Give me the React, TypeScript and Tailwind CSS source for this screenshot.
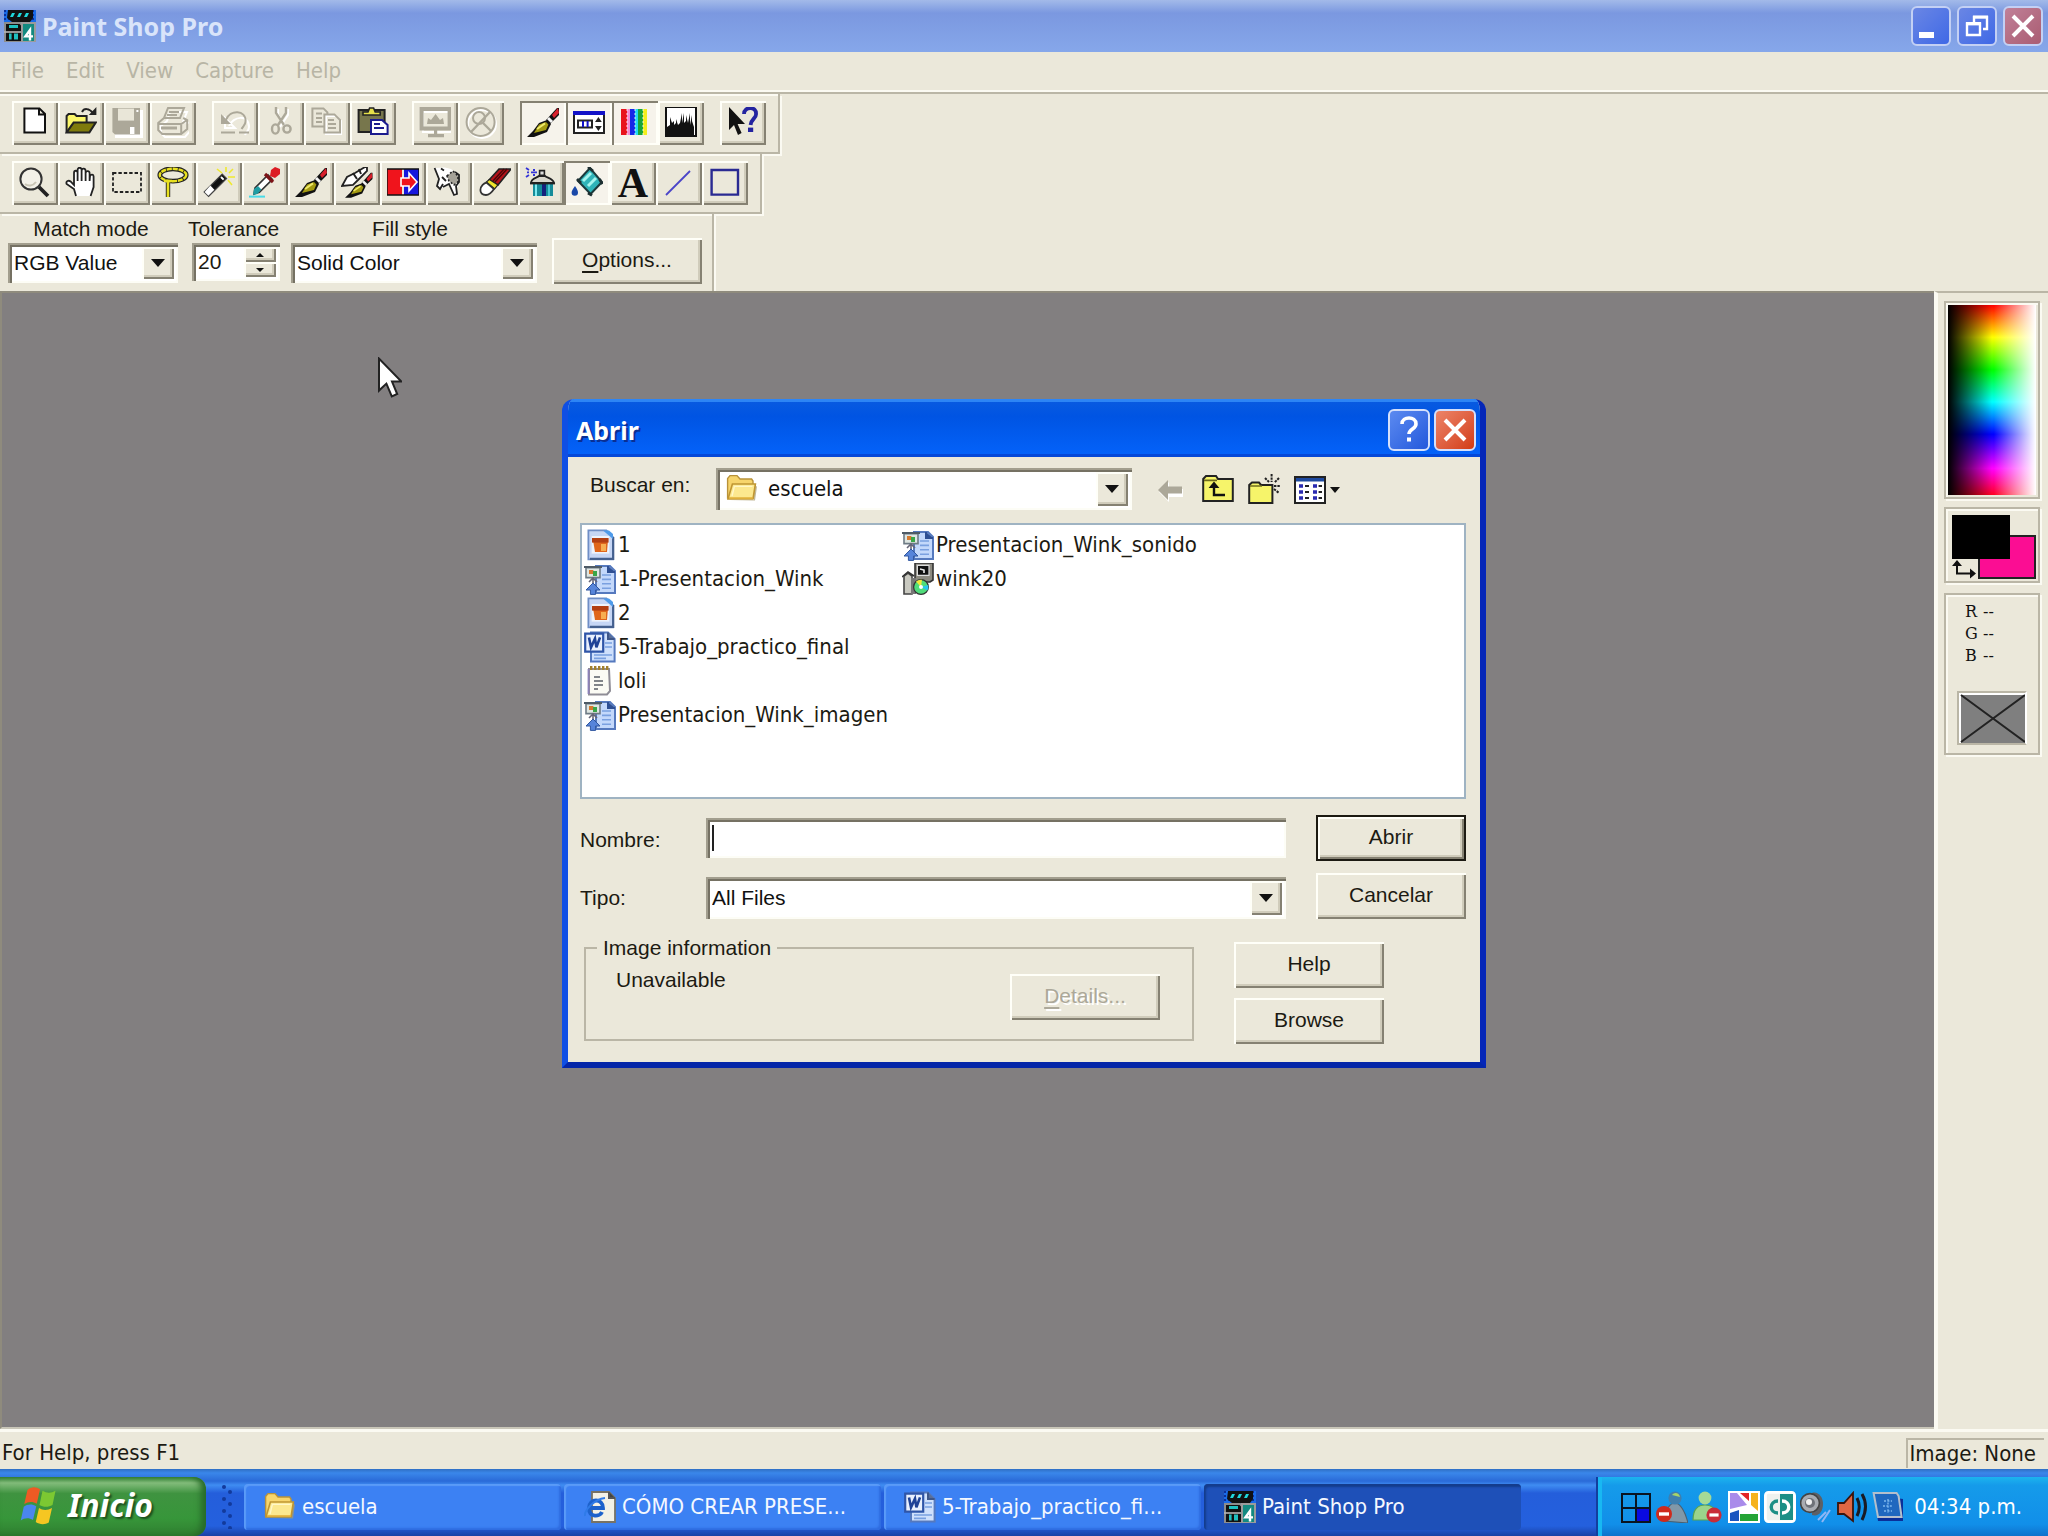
import type { ReactNode } from 'react';
import clsx from 'clsx';

const RAISED = 'bg-[#ebe8da] shadow-[inset_2px_2px_0_#fffff8,inset_-2px_-2px_0_#858172,inset_-4px_-4px_0_#d0ccbb]';
const SUNKEN = 'bg-white shadow-[inset_2px_2px_0_#a29e8e,inset_4px_4px_0_#757163,inset_-2px_-2px_0_#fdfdf6]';
const PRESSED = 'bg-[#f6f3eb] shadow-[inset_2px_2px_0_#858172,inset_-2px_-2px_0_#fffff8]';
const ETCHED = 'border-2 border-[#bab6a6] shadow-[2px_2px_0_#fbfaf2,inset_2px_2px_0_#fbfaf2]';
const TAHOMA = "font-['DejaVu_Sans_Condensed','Noto_Sans',sans-serif] text-[22px] leading-7";

const G = '#aca899';

interface IconProps {
  children: ReactNode;
  className?: string;
}

function Icon({ children, className = 'h-8 w-8' }: IconProps) {
  return (
    <svg viewBox="0 0 16 16" className={clsx('shrink-0', className)} fill="none" aria-hidden="true">
      {children}
    </svg>
  );
}

/* Brush is shared by the palette toggle, the paint tool and the clone tool */
const brush = (
  <>
    <path d="M9.5 6.5 15 .5h1V4l-4.5 4.5z" fill="#111" />
    <path d="m12.5 4 3-3.5.5 2.5-2.500 2.500z" fill="#d8202c" />
    <path d="m10.5 5.5 2 2" stroke="#f4f4f4" strokeWidth="1.5" />
    <path d="M0 15h3.500l6.500-2.500 2-4-2-2-4 1.500-3 4z" fill="#111" />
    <path d="M3.500 13 6 8.800l3.500-1.300 1.200 1.300L9.500 11.500z" fill="#a39a12" />
    <path d="m5 11 4-2.800" stroke="#efe96a" />
  </>
);

const icons: Record<string, ReactNode> = {
  new: <path d="M2.700.7h7.500L13 3.500v9.300H2.700zM10 .7v3h3" fill="#fff" stroke="#111" />,
  open: (
    <>
      <path d="M.8 12.500V4.500l1-1h3l1 1h5v4" fill="#fbf76a" stroke="#222" />
      <path d="m.8 12.700 3.500-4.900H15.400l-3.200 4.900z" fill="#7f7b0c" stroke="#222" />
      <path d="M8.500 2.500c1-2 3.500-2 5.500.5" stroke="#222" />
      <path d="M15.700 0v4h-3.800z" fill="#222" />
    </>
  ),
  save: (
    <>
      <path d="M2 1.500h14v14H2z" fill="#fff" />
      <path d="M.7.5h13.800v13.300H2L.7 12.500z" fill={G} />
      <path d="M3.500.8h8v6h-8z" fill="#e9e6d8" />
      <path d="M9.500 10h2.200v3.500H9.500zM12.700 1.500h1v1h-1z" fill="#fff" />
    </>
  ),
  print: (
    <>
      <path d="M5.500 1.500h8.500L12 6.500l3.500.5v4l-2.500 3H3l-2-2V8.500L4 6z" stroke="#fff" transform="translate(1 1)" />
      <path d="M5.500.5h8L11.500 5.500H3.500zM3.500 5.500.6 8v3.500l2 2h9.500l3-2.500V6.500l-2-1M.6 8.500h11.500l3-2M12.100 8.500v5M6 2.500h5M5 4h5" stroke={G} />
      <path d="M2 10.500h8" stroke={G} strokeWidth="1.500" />
    </>
  ),
  undo: (
    <>
      <path d="M2 4.500v5h5zM4 8.500c2-5 10-6 10 .5 0 2-1.500 2.500-2 4" stroke="#fff" transform="translate(1 1)" />
      <path d="M1 3.500v5h5z" fill={G} />
      <path d="M3.500 6.500C5.500 1 13.500 1.500 13.300 7c0 2-1.300 2.500-2 4" stroke={G} />
      <path d="M1 12.700h8M10 12.700h5" stroke={G} strokeDasharray="7 1 1 1" />
    </>
  ),
  cut: (
    <>
      <path d="M6.500 1v3l4 6M11.500 1v3l-4 6" stroke="#fff" />
      <path d="M5.500 0v3l4 6M10.500 0v3l-4 6" stroke={G} strokeWidth="1.200" />
      <ellipse cx="5.200" cy="11" rx="1.700" ry="2.300" stroke={G} strokeWidth="1.200" />
      <ellipse cx="11" cy="11" rx="1.800" ry="1.800" stroke={G} strokeWidth="1.200" />
    </>
  ),
  copy: (
    <>
      <path d="M.7.7h5.500l2 2v7H.7z" stroke={G} />
      <path d="M7.500 4.500h5l2.500 2.500v6.500H7.500z" stroke="#fff" fill="#ebe8da" />
      <path d="M6.700 3.700h5l2.800 2.800v6.200H6.700zM2.500 3.200h3M2.500 5.500h3M2.500 7.500h3M8.500 6.500h3M8.500 8.500h4M8.500 10.500h4" stroke={G} />
    </>
  ),
  paste: (
    <>
      <path d="M.8 1.500h13v11h-13z" fill="#77764c" stroke="#222" />
      <path d="M3 4V2.500h2.500l.8-2h2l.8 2h2.500V4z" fill="#e6e04a" stroke="#222" strokeWidth=".8" />
      <path d="M7 6.500h5.500L15.300 9v4.500H7z" fill="#fff" stroke="#1b1b8e" />
      <path d="M8.500 8.500h3M8.500 10.500h5" stroke="#1b1b8e" />
    </>
  ),
  screen: (
    <>
      <path d="M1 1.500h14v10H1z" stroke="#fff" transform="translate(1 1)" />
      <path d="M1.300 1h14v9.700h-14z" stroke={G} strokeWidth="2" />
      <path d="m4 8.500.5-3 1.500 1 2.300-3 2.200 3 1.500-1 .5 3z" fill={G} />
      <path d="M8.300 10v4M4.500 14.300h8" stroke={G} strokeWidth="1.600" />
    </>
  ),
  nozoom: (
    <>
      <circle cx="8.500" cy="8.500" r="7" stroke="#fff" />
      <circle cx="7.800" cy="7.500" r="7" stroke={G} />
      <circle cx="7" cy="5.500" r="3" stroke={G} />
      <path d="m12.500 2.500-9.500 10M9 8l4 4" stroke={G} strokeWidth="1.200" />
    </>
  ),
  brush,
  palette: (
    <>
      <path d="M.5 3h15v10H.5z" fill="#fff" stroke="#222" />
      <path d="M0 2h16v2H0z" fill="#1212c8" />
      <path d="M2.500 6.800h7v3.400h-7z" stroke="#222" />
      <path d="M5 7v3M7.300 7v3" stroke="#1212c8" />
      <path d="m12.700 5 1.700 2.500H11zM12.700 12l1.700-2.500H11z" fill="#222" />
    </>
  ),
  colors: (
    <>
      <path d="M1 1h3v13H1z" fill="#e8141c" />
      <path d="M4 1h1.500v13H4z" fill="#f58bd0" />
      <path d="M5.500 1H8v13H5.500z" fill="#1526e8" />
      <path d="M8 1h1.500v13H8z" fill="#23d8f4" />
      <path d="M9.500 1H12v13H9.500z" fill="#17a53a" />
      <path d="M12 1h2v13h-2z" fill="#f2ee1e" />
      <path d="M4 1v13M8 1v13M12 1v13" stroke="#fff" strokeWidth=".8" strokeDasharray="1 1" opacity=".5" />
    </>
  ),
  histogram: (
    <>
      <path d="M.5 0h15v14.500H.5z" fill="#fff" stroke="#111" />
      <path d="M1 14V10l1.500-1V5l1 3 1-1v2l1-1V6l1 3 1-1 1-5v5l1-5v5l1-1V4l1 4 1-5v6l1-5v3l1 3v4z" fill="#111" />
    </>
  ),
  help: (
    <>
      <path d="M1 0v11.500l2.500-2.500 2 5 1.800-1-2-4.500H9z" fill="#111" />
      <path d="M8.500 3.500c0-4 6.500-4 6 .2 0 2-2.500 2.300-2.700 5.300" stroke="#2424a0" strokeWidth="1.900" />
      <path d="M10.500 10.300h2.600v2.200h-2.600z" fill="#2424a0" />
    </>
  ),
  zoom: (
    <>
      <circle cx="6" cy="6" r="5.300" fill="#f3f1e8" stroke="#333" />
      <path d="M3 8.500c1.500 1.300 4 1 5.500-1" stroke="#c9c5b5" />
      <path d="m10 10 4.500 4.500" stroke="#222" strokeWidth="1.900" />
    </>
  ),
  pan: (
    <path
      d="M5.500 14.500 4.500 11 .8 8.500c-.5-1.500 1-2 2-1.300L4.500 9V3c0-1.500 1.800-1.500 1.800 0v4V1.500c0-1.500 2-1.500 2 0V7 1.800c.2-1.500 2-1.300 2 .2v5-4c.2-1.300 2-1.200 2 .2V7l.2-2.500c.5-1 1.800-.8 1.800.3V10l-1.500 4.500"
      fill="#fff"
      stroke="#222"
      strokeWidth=".9"
    />
  ),
  select: <path d="M1 3h14v9.500H1z" stroke="#222" strokeWidth=".9" strokeDasharray="1.700 1" />,
  lasso: (
    <>
      <path d="M5.500 8v7" stroke="#222" strokeWidth="2.200" />
      <ellipse cx="8" cy="4" rx="6.600" ry="3.100" stroke="#222" strokeWidth="2.400" />
      <ellipse cx="8" cy="4" rx="6.600" ry="3.100" stroke="#e8e020" strokeWidth="1.200" strokeDasharray="2.500 .4" />
      <path d="M5.500 7v8M3.500 7h4" stroke="#e8e020" strokeWidth="1.300" />
    </>
  ),
  wand: (
    <>
      <path d="m.6 12.500 9-9 2.200 2.200-9 9z" fill="#111" stroke="#444" strokeWidth=".6" />
      <path d="m1.500 12.500 1.200 1.200L5 11.400 3.700 10zM9 5l1.300 1.300" fill="#fff" stroke="#fff" />
      <path d="M11.500 0v2.500M7 1l2.500 2M15 1l-2 2M12.500 5H16M12.500 6.500l2 2.500" stroke="#efe930" strokeWidth=".8" />
    </>
  ),
  dropper: (
    <>
      <path d="M0 14.800h8" stroke="#49dbe8" />
      <path d="m2.500 13.500.5-3 6.500-6.500 2.200 2.200-6.500 6.500z" fill="#fff" stroke="#333" strokeWidth=".8" />
      <path d="m2 14 .5-3 2-1.500 1.700 1.700-2 2.300z" fill="#1f9da3" />
      <path d="m8 3.500 4 4" stroke="#7c1216" strokeWidth="1.600" />
      <path d="m10.500 4.500.5-3L13 0l2.500 1v2.500L13 5.500z" fill="#dc1c24" />
    </>
  ),
  clone: (
    <>
      <path d="M.5 9.500 3 5l4-2 5-3h1v2L9 6 6 9z" fill="#fff" stroke="#222" strokeWidth=".9" />
      <path d="m6 3 2 3M9 1l1 2.500" stroke="#222" />
      <g transform="translate(2 2.500) scale(.86)">{brush}</g>
    </>
  ),
  replace: (
    <>
      <path d="M0 1h7.500v13H0z" fill="#f0141c" />
      <path d="M8.500 1H16v13H8.500z" fill="#1717dd" />
      <path d="M0 1h16v13H0z" stroke="#111" strokeWidth=".7" />
      <path d="M7 5.500h4V3l4 4.500-4 4.500V9.500H7z" fill="#f0141c" stroke="#fff" strokeWidth=".8" />
    </>
  ),
  retouch: (
    <>
      <path d="M1 .5 6 .3l3 .7 4 3.500v4l-1 2v3.500l-1.500.5L8 9l-3 1.500-1.500.5L2 9l1-3z" fill="#fff" />
      <path d="M.8.5 3 6 2 9.500 3.500 11 5 8.500M5 10l3-1.500 2.500 5.500 1.500-.5-.5-4 1.500-2V4L11 2.500M4.500 5l2 2M4 .8l1.500 1" stroke="#222" strokeWidth=".9" />
      <path d="m7 4.500 3-2.500 2.500 2.500v3l-2 1.500L8 7z" fill="#a5a298" stroke="#222" strokeWidth=".8" strokeDasharray="1 1" />
    </>
  ),
  eraser: (
    <>
      <path d="m5 6.500 5-5.500h6L9.500 9z" fill="#b5121a" stroke="#222" strokeWidth=".8" />
      <path d="m7 7 5.500-6M14 1 8 7.500" stroke="#4a0508" strokeWidth=".7" />
      <path d="m3.700 7.500 1.500-1.300L9.500 9l-1.700 2z" fill="#efe42c" stroke="#222" strokeWidth=".6" />
      <path d="M.7 11.500c0-2 2-3.500 3-3.700L7.500 11c-1 1.500-2 3-4 3S.7 13 .7 11.500z" fill="#fff" stroke="#333" strokeWidth=".9" />
    </>
  ),
  airbrush: (
    <>
      <path d="M.5.5 2 1.500M.5 5 2 4M3 2.700h3M1 2.700h1M4 1.500h1M4 4h1" stroke="#3434d6" strokeWidth=".9" />
      <path d="M7.300 1.800h2.400v2.300H7.300z" fill="#ddd" stroke="#222" strokeWidth=".8" />
      <path d="M3 8c0-2.500 3-2.500 4-3.500h3c1 1 4 1 4.500 3.500z" fill="#d9d7cc" stroke="#222" strokeWidth=".9" />
      <path d="M4 8.500h10v6H4z" fill="#158c99" />
      <path d="M5.500 8.500v6" stroke="#7eeaf0" />
      <path d="M9.500 8.500v6" stroke="#15217c" strokeWidth="2" />
      <path d="M12 8.500v6" stroke="#4ac7d2" />
      <path d="M2.500 8.200h12.500" stroke="#222" />
    </>
  ),
  fill: (
    <>
      <path d="m3.500 7 6-6.500L15.500 7.500 9.800 13.500z" fill="#2fb3b8" stroke="#1b3a3c" />
      <path d="m6 7 4-4M8.500 9.500l4-4" stroke="#a5f4ee" strokeWidth="1.500" />
      <path d="M8.500 0 11 2M14.200 6l1.500 2.500M3 6l2 2M8.500 13l2 1.200" stroke="#1d2e30" strokeWidth="1.400" />
      <path d="M2 9.500c1 1.500 1.500 2.300 1.500 3.300a1.600 1.600 0 0 1-3.200 0C.3 11.800 1 11 2 9.500z" fill="#1a48a8" />
    </>
  ),
  line: <path d="M1.500 14 13.500 2" stroke="#4a44c8" strokeWidth=".9" />,
  rect: <path d="M1.300 1.500h13.200v12.300H1.300z" stroke="#2a2a92" strokeWidth="1.200" />,
};

function PspIcon({ className = 'h-8 w-8' }: { className?: string }) {
  return (
    <Icon className={className}>
      <path d="M0 0h16v6H0z" fill="#1a6be8" />
      <path d="M0 .5h16M0 2.500h16M0 4.500h16" stroke="#0a2f9a" strokeDasharray="1 1" />
      <path d="M2 0h12.500v4L13 6H4L1.500 4z" fill="#111" />
      <path d="m3 3.500 1-2h1.500l-1 2zM6.500 3.500l1-2H9l-1 2zM10 3.500l1-2h1.500l-1 2z" fill="#1fd8dc" />
      <path d="M.5 6.500H8l1 1V16H.5z" fill="#111" stroke="#8d8d8d" />
      <path d="M2.500 8.300h4.500M2.500 12.500h1.300M5 12.500h2M2.500 14h1.300M5 14h2" stroke="#1fc0c0" strokeWidth="1.500" />
      <path d="M0 11h8.500" stroke="#b5b5b5" strokeWidth=".8" />
      <path d="M9 6.500h6.500V16H9z" fill="#138a80" stroke="#9b9b9b" />
      <path d="M13 15.200V10l-2.300 3.200h3.800" stroke="#fff" strokeWidth="1.200" />
    </Icon>
  );
}

function FolderIcon() {
  return (
    <Icon>
      <path d="M2 13.800h12.500l1-7-1.500-.5V14z" fill="#a79a6c" opacity=".7" />
      <path d="M.8 12.500V2.800L2 1.300h3.500L7 3h5.800l.7 1v8.500z" fill="#f7d56c" stroke="#b8923a" strokeWidth=".7" />
      <path d="M1 13 3.200 5.500h11.500L13.500 13z" fill="#fce88f" stroke="#c09632" strokeWidth=".8" />
      <path d="M3 11.500 4.200 6.700h9" stroke="#fff7c8" strokeWidth=".7" />
      <path d="M1.500 12.500h12" stroke="#e2b038" strokeWidth=".8" />
    </Icon>
  );
}

function PictureFileIcon() {
  return (
    <Icon>
      <path d="M2.200.7h9L14.500 4v11.200H2.200z" fill="#c6d6f5" stroke="#6f8ec6" strokeWidth=".9" />
      <path d="M3 14.900h11.600V4" stroke="#44608f" strokeWidth="1.100" />
      <path d="M9.500.7 14.500 5V2.500L12.500.7z" fill="#4f9bea" />
      <path d="M3.800 3.500h8.900v8.800H3.800z" fill="#eef3fc" />
      <path d="M4.500 5.500h7.500l-.5 6h-6z" fill="#e0661c" />
      <path d="M4 4.500h8.300v2.300H4z" fill="#b33f14" />
      <path d="M8.500 7.500h2.500v3.500H8.500z" fill="#f7ae52" />
    </Icon>
  );
}

function SlidesFileIcon() {
  return (
    <Icon>
      <path d="M6 1.500h7L15.500 4v11H6z" fill="#c3d8fb" stroke="#5579be" />
      <path d="M12 1.500v3h3.500" fill="#2e4f93" stroke="#2e4f93" />
      <path d="M9 6h4.500M9 8.200h4.500M9 10.400h4.500M9 12.600h4.500" stroke="#7aa0e0" strokeWidth=".8" />
      <path d="M1 2.300h7v5H1z" fill="#dfe6e2" stroke="#6e7b85" strokeWidth=".8" />
      <path d="M0 2h9" stroke="#4e5b66" />
      <path d="M2.500 3.500h2.200v2H2.500z" fill="#d77a2f" />
      <path d="M4.500 4h2v2.500h-2z" fill="#3aa648" />
      <path d="M4.500 7.500v4M2.500 9.500l2-2 2 2" stroke="#667" strokeWidth=".8" />
      <path d="M4.500 10 8 13.500H5.800V15.700H3.200V13.500H1z" fill="#5684da" stroke="#31579f" strokeWidth=".5" />
    </Icon>
  );
}

function WordFileIcon() {
  return (
    <Icon>
      <path d="M3.500.8h8.500L15.300 4v11.200H3.500z" fill="#cfe0fc" stroke="#5579be" />
      <path d="M12 .8V4h3.300" fill="#5a6f98" stroke="#3e5688" />
      <path d="M10.500 6h3.500M10.500 8h3.500M5 12h9M5 13.700h6" stroke="#7aa0e0" strokeWidth=".8" />
      <path d="M.6 1.300h9v9h-9z" fill="#e9f0fd" stroke="#2f55a8" strokeWidth="1.100" />
      <path d="m2.500 3.200 1 5L5.500 3.800l.7 4.400L8 3.200" stroke="#1f4297" strokeWidth="1.300" />
    </Icon>
  );
}

function NoteFileIcon() {
  return (
    <Icon>
      <path d="M2.500 2h10l.5 11-1.500 1.700h-9z" fill="#fbfbf4" stroke="#8f8d96" />
      <path d="M2.300 2v12.500" stroke="#8d82b8" />
      <path d="M3 1.500h9.500" stroke="#a2802c" strokeWidth="2" strokeDasharray="1.200 .8" />
      <path d="M5 6h3M5 8h4.500M5 10h4.500M5 12h2" stroke="#5a5f66" strokeWidth=".8" />
    </Icon>
  );
}

function SetupFileIcon() {
  return (
    <Icon>
      <path d="M6.500 0h9v8.500l-1.500 1h-7.500z" fill="#8c8a80" stroke="#333" strokeWidth=".8" />
      <path d="M7.700 1.200h5.800v5H7.700z" fill="#111" stroke="#ddd" strokeWidth=".6" />
      <path d="m9 3 2 .5v1.500" stroke="#eee" strokeWidth=".8" />
      <path d="M1 6.500 3 5l2 1.500v9H1z" fill="#c9c9c0" stroke="#444" strokeWidth=".8" />
      <path d="M4.500 7.500h2.500v8H4.500z" fill="#777" />
      <path d="M0 7 3 4.500 6 6.500" stroke="#333" strokeWidth=".8" />
      <circle cx="9.500" cy="12" r="3.700" fill="#4fdc7a" stroke="#333" strokeWidth=".6" />
      <path d="M9.500 12 7 9.200A3.700 3.700 0 0 1 10 8.400z" fill="#f0e83a" />
      <path d="m9.500 12 3.600-1a3.700 3.700 0 0 1-.4 2.800z" fill="#27c8ee" />
      <circle cx="9.500" cy="12" r="1" fill="#fff" />
    </Icon>
  );
}

function IeIcon() {
  return (
    <Icon>
      <path d="M4 .5h8.500l3 3V15.500H4z" fill="#f3f1e6" stroke="#777264" strokeWidth=".9" />
      <path d="M12.500.5v3h3" fill="#444" stroke="#555" />
      <path d="M2 8.500h7.500c0-5-7-5-7 0s5.500 4.500 6.500 2" stroke="#1d62cc" strokeWidth="1.900" />
      <path d="M.5 12.500C0 10 5 4 10.500 3.500" stroke="#2f7be8" strokeWidth=".9" />
    </Icon>
  );
}

function DownArrow() {
  return (
    <svg viewBox="0 0 14 8" className="h-2 w-[14px]" aria-hidden="true">
      <path d="M0 0h14L7 8z" fill="#111" />
    </svg>
  );
}

interface ToolButtonProps {
  label: string;
  icon: string;
  disabled?: boolean;
  pressed?: boolean;
}

function ToolButton({ label, icon, disabled, pressed }: ToolButtonProps) {
  return (
    <button
      type="button"
      aria-label={label}
      aria-pressed={pressed}
      disabled={disabled}
      className={clsx('flex h-11 w-[46px] items-center justify-center', pressed ? PRESSED : RAISED)}
    >
      {icon === 'text' ? (
        <span className="font-['Liberation_Serif',serif] text-[42px] leading-8 font-bold text-[#111]">A</span>
      ) : (
        <Icon>{icons[icon]}</Icon>
      )}
    </button>
  );
}

interface ComboProps {
  id: string;
  value: string;
  className?: string;
  icon?: ReactNode;
}

function Combo({ id, value, className, icon }: ComboProps) {
  return (
    <div className={clsx('flex items-center p-1', SUNKEN, className)}>
      {icon}
      <select
        id={id}
        defaultValue={value}
        className={clsx('h-full min-w-0 flex-1 appearance-none bg-transparent text-[#111] outline-none', icon ? 'pl-[10px]' : 'pl-[2px]')}
      >
        <option>{value}</option>
      </select>
      <span className={clsx('flex h-full w-8 shrink-0 items-center justify-center', RAISED)}>
        <DownArrow />
      </span>
    </div>
  );
}

const fileTools: ToolButtonProps[][] = [
  [
    { label: 'New', icon: 'new' },
    { label: 'Open', icon: 'open' },
    { label: 'Save', icon: 'save', disabled: true },
    { label: 'Print', icon: 'print', disabled: true },
  ],
  [
    { label: 'Undo', icon: 'undo', disabled: true },
    { label: 'Cut', icon: 'cut', disabled: true },
    { label: 'Copy', icon: 'copy', disabled: true },
    { label: 'Paste', icon: 'paste' },
  ],
  [
    { label: 'Full screen', icon: 'screen', disabled: true },
    { label: 'Normal viewing', icon: 'nozoom', disabled: true },
  ],
  [
    { label: 'Tool palette', icon: 'brush', pressed: true },
    { label: 'Control palette', icon: 'palette', pressed: true },
    { label: 'Color palette', icon: 'colors', pressed: true },
    { label: 'Histogram', icon: 'histogram' },
  ],
  [{ label: 'Context help', icon: 'help' }],
];

const paintTools: ToolButtonProps[] = [
  { label: 'Zoom', icon: 'zoom' },
  { label: 'Pan', icon: 'pan' },
  { label: 'Selection', icon: 'select' },
  { label: 'Lasso', icon: 'lasso' },
  { label: 'Magic wand', icon: 'wand' },
  { label: 'Dropper', icon: 'dropper' },
  { label: 'Paintbrush', icon: 'brush' },
  { label: 'Clone brush', icon: 'clone' },
  { label: 'Color replacer', icon: 'replace' },
  { label: 'Retouch', icon: 'retouch' },
  { label: 'Eraser', icon: 'eraser' },
  { label: 'Airbrush', icon: 'airbrush' },
  { label: 'Flood fill', icon: 'fill', pressed: true },
  { label: 'Text', icon: 'text' },
  { label: 'Line', icon: 'line' },
  { label: 'Shape', icon: 'rect' },
];

const files = [
  { name: '1', icon: <PictureFileIcon /> },
  { name: '1-Presentacion_Wink', icon: <SlidesFileIcon /> },
  { name: '2', icon: <PictureFileIcon /> },
  { name: '5-Trabajo_practico_final', icon: <WordFileIcon /> },
  { name: 'loli', icon: <NoteFileIcon /> },
  { name: 'Presentacion_Wink_imagen', icon: <SlidesFileIcon /> },
  { name: 'Presentacion_Wink_sonido', icon: <SlidesFileIcon /> },
  { name: 'wink20', icon: <SetupFileIcon /> },
];

const tasks = [
  { name: 'escuela', icon: <FolderIcon /> },
  { name: 'CÓMO CREAR PRESE...', icon: <IeIcon /> },
  { name: '5-Trabajo_practico_fi...', icon: <WordFileIcon /> },
  { name: 'Paint Shop Pro', icon: <PspIcon />, active: true },
];

function TitleBar() {
  const button = 'flex h-10 w-10 items-center justify-center rounded-md border-2 border-[#c3d0f4]';
  return (
    <header className="flex h-[52px] shrink-0 items-center bg-linear-to-b from-[#a3bae9] via-[#7b98e0] via-25% to-[#86a7ea] pr-[5px] pl-1">
      <PspIcon />
      <h1 className="ml-[6px] flex-1 font-['Noto_Sans','Open_Sans',sans-serif] text-[25px] leading-8 font-bold text-[#d9e4fa]">
        Paint Shop Pro
      </h1>
      <div className="flex gap-[6px]">
        <button type="button" aria-label="Minimize" className={clsx(button, 'bg-linear-to-br from-[#6a86e4] to-[#3f68e6]')}>
          <Icon className="h-8 w-8">
            <path d="M2 11h7.500v3H2z" fill="#fff" />
          </Icon>
        </button>
        <button type="button" aria-label="Restore" className={clsx(button, 'bg-linear-to-br from-[#6a86e4] to-[#3f68e6]')}>
          <Icon className="h-8 w-8">
            <path d="M6.500 6V3.500H13v6h-2" stroke="#fff" strokeWidth="1.200" />
            <path d="M6 2.800h7.500v1.500H6z" fill="#fff" />
            <path d="M3 6.700h6.500v5.800H3z" stroke="#fff" strokeWidth="1.200" />
            <path d="M2.500 6H10v1.700H2.500z" fill="#fff" />
          </Icon>
        </button>
        <button type="button" aria-label="Close" className={clsx(button, 'bg-linear-to-br from-[#c08098] to-[#aa5c72]')}>
          <Icon className="h-8 w-8">
            <path d="m3 3 10 10M13 3 3 13" stroke="#fff" strokeWidth="2" />
          </Icon>
        </button>
      </div>
    </header>
  );
}

function ColorPanel() {
  return (
    <aside className="flex w-[114px] shrink-0 flex-col gap-2 border-t-2 border-l-4 border-t-[#bab6a6] border-l-[#fbfaf2] pt-2 pr-2 pl-[6px]">
      <div className={clsx('h-[198px] p-[2px]', ETCHED)}>
        <div className="h-full w-full bg-[linear-gradient(to_right,#000,transparent_50%,transparent_52%,#fff),linear-gradient(to_bottom,#f00,#ff0_17%,#0f0_34%,#0ff_51%,#00f_68%,#f0f_86%,#f02)]" />
      </div>
      <div className={clsx('relative h-[76px]', ETCHED)}>
        <button type="button" aria-label="Background color" className="absolute top-[26px] right-[2px] h-11 w-[58px] border-2 border-[#222] bg-[#fb0d93]" />
        <button type="button" aria-label="Foreground color" className="absolute top-[6px] left-[6px] h-11 w-[58px] bg-black" />
        <svg viewBox="0 0 24 20" className="absolute bottom-[1px] left-[6px] h-5 w-6" fill="none" aria-hidden="true">
          <path d="M5 4v9.500h14" stroke="#111" strokeWidth="2" />
          <path d="M5 0 0 6h10zM24 13.500 18 8.500v10z" fill="#111" />
        </svg>
      </div>
      <div className={clsx('mt-[2px] flex h-[162px] flex-col items-center pt-[6px]', ETCHED)}>
        <dl className="mr-5 grid grid-cols-[18px_16px] font-['DejaVu_Serif',serif] text-base leading-[22px] text-[#111]">
          <dt>R</dt>
          <dd>--</dd>
          <dt>G</dt>
          <dd>--</dd>
          <dt>B</dt>
          <dd>--</dd>
        </dl>
        <svg viewBox="0 0 66 50" className="mt-[24px] h-[54px] w-[70px] border-2 border-[#bab6a6] border-r-white" aria-hidden="true">
          <path d="M0 0h66v50H0z" fill="#fff" />
          <path d="M2 2h64v48H2z" fill="#7f7f7f" />
          <path d="m2 2 64 47M66 2 2 49" stroke="#222" strokeWidth="2" />
        </svg>
      </div>
    </aside>
  );
}

function DialogButton({ children, className, disabled }: { children: ReactNode; className?: string; disabled?: boolean }) {
  return (
    <button
      type="button"
      disabled={disabled}
      className={clsx('h-[46px] w-[150px] pb-[2px]', RAISED, disabled ? 'text-[#aca899] [text-shadow:2px_2px_0_#fff]' : 'text-[#1c1a12]', className)}
    >
      {children}
    </button>
  );
}

function OpenDialog() {
  const captionButton = 'flex h-[42px] w-[42px] items-center justify-center rounded-md border-2 border-[#d5e0fb]';
  return (
    <div
      role="dialog"
      aria-labelledby="dialog-title"
      className="absolute top-[108px] left-[562px] w-[924px] overflow-hidden rounded-t-xl border-x-[6px] border-b-[6px] border-t-0 border-r-[#0426b8] border-b-[#0426a8] border-l-[#0f4fe4] bg-[#ebe8da]"
    >
      <div className="-mx-[6px] flex h-[58px] items-center gap-1 bg-linear-to-b from-[#0a5be0] via-[#0054e3] via-30% to-[#0463fb] pt-1 pr-[10px] pl-[14px] shadow-[inset_0_3px_0_#2d85f5,inset_0_-3px_0_#0448d8]">
        <h2 id="dialog-title" className="flex-1 font-['Noto_Sans','Open_Sans',sans-serif] text-[25px] leading-8 font-bold text-white [text-shadow:2px_2px_0_#0a2f94]">
          Abrir
        </h2>
        <button type="button" aria-label="Help" className={clsx(captionButton, 'bg-linear-to-br from-[#5c8af0] to-[#2458dc]')}>
          <Icon className="h-8 w-8">
            <path d="M4.500 5C4.500 1 11.500 1 11.500 5c0 2.500-3.500 2.500-3.500 5" stroke="#fff" strokeWidth="1.800" />
            <path d="M7 11.700h2v2H7z" fill="#fff" />
          </Icon>
        </button>
        <button type="button" aria-label="Close" className={clsx(captionButton, 'bg-linear-to-br from-[#ec8468] to-[#d23a10]')}>
          <Icon className="h-8 w-8">
            <path d="m3 3 10 10M13 3 3 13" stroke="#fff" strokeWidth="2" />
          </Icon>
        </button>
      </div>

      <div className="pt-[11px] pr-[14px] pb-[18px] pl-3">
        {/* Look-in row */}
        <div className="flex items-center">
          <label htmlFor="look-in" className="w-[136px] pb-2 pl-[10px]">
            Buscar en:
          </label>
          <Combo id="look-in" value="escuela" icon={<span className="pl-[6px]"><FolderIcon /></span>} className={clsx('h-[42px] w-[416px]', TAHOMA)} />
          <div className="ml-[24px] flex items-center gap-[14px] pt-[2px]">
            <button type="button" aria-label="Back" disabled>
              <Icon className="h-8 w-8">
                <path d="m1.500 9 5-5v3.500h7v4h-7V14z" fill="#fff" />
                <path d="m1 8 5-5v3.300h7v3.400H6V13z" fill={G} />
              </Icon>
            </button>
            <button type="button" aria-label="Up one level">
              <Icon>
                <path d="M.6 13.500V2.500L2 1h5l1 1.500h7.400v11z" fill="#f6f46a" stroke="#222" />
                <path d="M1 3.200h6.500" stroke="#6f6c1c" strokeWidth=".8" />
                <path d="M6 6v4.500h5.500" stroke="#111" strokeWidth="1.200" />
                <path d="M6 3.800 3.300 7h5.400z" fill="#111" />
              </Icon>
            </button>
            <button type="button" aria-label="New folder">
              <Icon>
                <path d="M.6 14.500V5.500L2 4.300h3.500l1 1.200h5.700v9z" fill="#f6f46a" stroke="#222" />
                <path d="M1 6h6" stroke="#6f6c1c" strokeWidth=".8" />
                <path d="M11.800 0v4M8.500 2l2 2M15.500 2l-2.300 2.300M13 6h3M13 7.500l2.500 2" stroke="#222" strokeDasharray="1.200 .5" />
              </Icon>
            </button>
            <button type="button" aria-label="Views" className="flex items-center gap-1">
              <Icon>
                <path d="M.5 1.500h15v13H.5z" fill="#fff" stroke="#222" />
                <path d="M1 2h14v1.800H1z" fill="#1e4aa0" />
                <path d="M2.500 6h2M2.500 9h2M2.500 12h2M9.500 6h2M9.500 9h2M9.500 12h2" stroke="#2a2ab0" strokeWidth="1.700" />
                <path d="M5.500 6h2M5.500 9h2M5.500 12h2M12.300 6h1.700M12.300 9h1.700M12.300 12h1.700" stroke="#222" strokeWidth=".9" />
              </Icon>
              <svg viewBox="0 0 10 6" className="h-[6px] w-[10px]" aria-hidden="true">
                <path d="M0 0h10L5 6z" fill="#111" />
              </svg>
            </button>
          </div>
        </div>

        <ul className={clsx('mt-[13px] grid h-[276px] auto-cols-[318px] grid-flow-col grid-rows-[repeat(6,34px)] border-2 border-[#9fb3c2] bg-white pt-[3px] pl-[2px]', TAHOMA)}>
          {files.map((file) => (
            <li key={file.name} className="flex items-center gap-[2px]">
              {file.icon}
              <span>{file.name}</span>
            </li>
          ))}
        </ul>

        {/* Name and type */}
        <div className="mt-4 flex justify-between">
          <div className="grid grid-cols-[126px_580px] items-center gap-y-[18px] pt-[2px]">
            <label htmlFor="file-name" className="pt-1">Nombre:</label>
            <div className={clsx('flex h-10 items-center p-[6px]', SUNKEN)}>
              <span className="h-[26px] w-[2px] bg-[#222]" aria-hidden="true" />
              <input id="file-name" type="text" className="h-full min-w-0 flex-1 bg-transparent outline-none" />
            </div>
            <label htmlFor="file-type">Tipo:</label>
            <Combo id="file-type" value="All Files" className="h-[42px]" />
          </div>
          <div className="flex flex-col gap-3">
            <DialogButton className="border-2 border-[#1c1a12]">Abrir</DialogButton>
            <DialogButton>Cancelar</DialogButton>
          </div>
        </div>

        <div className="mt-[17px] flex items-end">
          <fieldset className="mb-[3px] ml-1 flex h-[105px] w-[610px] items-start justify-between border-2 border-[#bab6a6] pr-[32px] pl-[30px]">
            <legend className="-ml-[19px] px-[6px] leading-6">Image information</legend>
            <p className="pt-2 leading-6">Unavailable</p>
            <DialogButton disabled className="mt-[14px]">
              <span className="underline underline-offset-4">D</span>etails...
            </DialogButton>
          </fieldset>
          <div className="ml-10 flex flex-col gap-[10px]">
            <DialogButton>Help</DialogButton>
            <DialogButton>Browse</DialogButton>
          </div>
        </div>
      </div>
    </div>
  );
}

function TrayIcons() {
  return (
    <div className="flex gap-1">
      <Icon>
        <path d="M1 1.500h14v14H1z" stroke="#0a1420" />
        <path d="M8 1.500v14M1 8.500h14" stroke="#0a1420" />
        <path d="M8.500 9h6v6h-6z" fill="#0a0ae0" />
      </Icon>
      <Icon>
        <path d="M4 15c1-6 3-9 5.500-9s5 4 6.500 10z" fill="#8198a8" stroke="#4c6070" strokeWidth=".6" />
        <circle cx="9.500" cy="3.500" r="3.300" fill="#3f7fae" />
        <path d="M8 2c1-1.500 3.500-1.500 4 1z" fill="#a7d46a" />
        <circle cx="4" cy="11.500" r="4" fill="#cf2a1c" />
        <path d="M1.500 11.500h5" stroke="#fff" strokeWidth="1.700" />
      </Icon>
      <Icon>
        <path d="M.5 14.500C.5 9 3 7 6.500 7s6 2 6 7.500z" fill="#9bd48b" stroke="#5aa350" strokeWidth=".6" />
        <circle cx="6.500" cy="3.500" r="3.200" fill="#a6da96" />
        <circle cx="11" cy="12" r="3.800" fill="#c92c38" />
        <path d="M8.700 12h4.600" stroke="#fff" strokeWidth="1.600" />
      </Icon>
      <Icon>
        <path d="M0 0h16v16H0z" fill="#fff" />
        <path d="M1 1h3.500l5 6L1 9z" fill="#a98bea" />
        <path d="M6 1h4.500v4z" fill="#e22424" />
        <path d="M11.500 1H15v9l-3.500-3z" fill="#f6b21c" />
        <path d="M6 11.500h9V15H6z" fill="#25a435" />
        <path d="M1 15v-4l4.500-1.500V15z" fill="#1a55c0" />
      </Icon>
      <Icon>
        <rect x=".7" y=".7" width="14.600" height="14.600" rx="1.500" fill="#eef1ee" stroke="#fff" strokeWidth="1.400" />
        <path d="M8 1.500h6.500v13H8z" fill="#1c8f86" />
        <path d="M7 5C2.500 5 2.500 11 7 11" stroke="#1c8f86" strokeWidth="1.700" />
        <path d="M9 5c4.500 0 4.500 6 0 6" stroke="#fff" strokeWidth="1.700" />
      </Icon>
      <Icon>
        <path d="M6 1c3-1 5.500 2 5.500 5.500S9.500 13 6 12z" fill="#5e6066" />
        <circle cx="5" cy="6" r="4.700" fill="#a9acb2" stroke="#444" strokeWidth=".8" />
        <circle cx="5" cy="6" r="2.500" fill="#6f7279" />
        <circle cx="4.500" cy="5.500" r="1.500" fill="#f1f1f1" />
        <path d="m9 14.500 4-4M11 15.500l4-6" stroke="#8fb6f4" />
      </Icon>
      <Icon>
        <path d="M1 6h3l4.500-5v14L4 11.500H1z" fill="#df6743" stroke="#3a140c" strokeWidth=".9" />
        <path d="M10.500 3.500c1.500 3 1.500 6 0 9M13 1.500c2.300 4 2.300 8.500 0 13" stroke="#1a1a22" strokeWidth="1.500" />
      </Icon>
      <Icon>
        <path d="m1 2 2 13h12.500V4" fill="#0a2f9a" />
        <path d="M.8 1h11.500l1 1.500L14.800 13H3z" fill="#1f68bf" stroke="#b4bfcc" />
        <path d="M6 5h4M5.500 7.500h5M6 10h4M8 4v7" stroke="#7fb8ee" strokeWidth=".7" strokeDasharray="1 .7" />
      </Icon>
    </div>
  );
}

function Taskbar() {
  return (
    <footer
      className={clsx(
        'flex h-[67px] shrink-0 items-stretch bg-[linear-gradient(to_bottom,#2f6fc4_0,#3a87ea_6%,#2a6ad8_18%,#3f8df2_24%,#245edb_36%,#2460de_85%,#1941a5)] text-white',
        TAHOMA,
      )}
    >
      <button
        type="button"
        className="mt-2 flex w-[206px] items-center gap-2 rounded-r-xl bg-[linear-gradient(to_bottom,#3f8f3f_0,#84bd7c_10%,#3f9340_28%,#37963a_70%,#2f7f30)] pb-1 pl-5 shadow-[inset_-5px_0_6px_#276a28]"
      >
        <Icon className="h-10 w-10">
          <path d="M3 2c1.500-1.500 3.500-1.300 5-.3L6.700 7.500C5.200 6.500 3.300 6.500 1.700 7.600z" fill="#ee5a24" />
          <path d="M9 2.300c1.700 1 3.500 1 5.200 0L13 8c-1.700 1-3.700.9-5.200 0z" fill="#7cc832" />
          <path d="M1.500 8.700C3 7.500 5 7.500 6.500 8.500L5.200 14C3.700 13 1.800 13 .3 14.200z" fill="#4a86ee" />
          <path d="M7.600 9.200c1.500 1 3.500 1 5.200 0L11.500 15c-1.700 1-3.700.8-5.200-.2z" fill="#f6c622" />
        </Icon>
        <span className="font-['Noto_Sans','Open_Sans',sans-serif] text-[32px] leading-9 font-bold italic [text-shadow:2px_2px_2px_#1d4f1e]">
          Inicio
        </span>
      </button>
      <svg viewBox="0 0 12 44" className="mt-4 mr-[10px] ml-4 h-11 w-3" aria-hidden="true">
        {[2, 14, 26, 38].map((y) => (
          <g key={y} fill="#123a9c">
            <circle cx="2" cy={y} r="2" />
            <circle cx="8" cy={y + 5} r="2" />
          </g>
        ))}
      </svg>
      <nav className="mt-[15px] mb-[6px] flex min-w-0 flex-1 gap-[3px]">
        {tasks.map((task) => (
          <button
            key={task.name}
            type="button"
            className={clsx(
              'flex h-[46px] w-[317px] items-center gap-[6px] rounded-sm pl-5 text-[#f4f8ff]',
              task.active ? 'bg-[#1e50b8] shadow-[inset_2px_3px_2px_#143c8c]' : 'bg-[#3c81f3] shadow-[inset_2px_2px_1px_#5a9bf8,inset_-2px_-2px_2px_#2f6ce0]',
            )}
          >
            {task.icon}
            <span className="truncate">{task.name}</span>
          </button>
        ))}
      </nav>
      <div className="mt-2 flex items-center gap-[10px] border-l-4 border-l-[#18b8f2] bg-[linear-gradient(to_bottom,#1cb4ee_0,#159bea_14%,#118fe9_80%,#0f72cc)] pr-[26px] pl-[18px] shadow-[-2px_0_0_#123f9e]">
        <TrayIcons />
        <time className="whitespace-nowrap">04:34 p.m.</time>
      </div>
    </footer>
  );
}

export default function App() {
  return (
    <div className="flex h-screen flex-col overflow-hidden bg-[#ebe8da] font-['Liberation_Sans',Arial,sans-serif] text-[21px] leading-7 text-[#1c1a12]">
      <TitleBar />

      <nav className={clsx('flex h-10 shrink-0 items-center gap-[22px] border-b-2 border-[#fbfaf2] pl-[11px] text-[#b8b5a5]', TAHOMA)}>
        {['File', 'Edit', 'View', 'Capture', 'Help'].map((item) => (
          <button key={item} type="button">{item}</button>
        ))}
      </nav>

      {/* Toolbars */}
      <div className="flex shrink-0 flex-col items-start border-t-2 border-[#bab6a6]">
        <div className="flex h-[60px] gap-4 border-r-2 border-b-2 border-[#bab6a6] px-3 pt-[7px] shadow-[2px_2px_0_#fbfaf2,inset_0_2px_0_#fbfaf2]">
          {fileTools.map((group) => (
            <div key={group[0].icon} className="flex">
              {group.map((tool) => (
                <ToolButton key={tool.label} {...tool} />
              ))}
            </div>
          ))}
        </div>
        <div className="flex h-[60px] border-r-2 border-b-2 border-[#bab6a6] px-3 pt-[7px] shadow-[2px_2px_0_#fbfaf2]">
          {paintTools.map((tool) => (
            <ToolButton key={tool.label} {...tool} />
          ))}
        </div>
        <div className="flex h-[77px] items-start border-r-2 border-[#bab6a6] pr-[10px] pl-2 shadow-[2px_0_0_#fbfaf2]">
          <div className="flex w-[170px] flex-col">
            <label htmlFor="match-mode" className="pt-px pr-1 text-center">Match mode</label>
            <Combo id="match-mode" value="RGB Value" className="h-10" />
          </div>
          <div className="ml-[10px] flex flex-col">
            <label htmlFor="tolerance" className="pt-px">Tolerance</label>
            <div className={clsx('ml-1 flex h-[38px] w-[88px] items-center p-1', SUNKEN)}>
              <input id="tolerance" type="text" defaultValue="20" className="h-full min-w-0 flex-1 bg-transparent pl-[2px] outline-none" />
              <div className="flex h-full w-8 flex-col">
                <button type="button" aria-label="Increase" className={clsx('flex flex-1 items-center justify-center', RAISED)}>
                  <svg viewBox="0 0 8 4" className="h-1 w-2"><path d="M0 4h8L4 0z" fill="#111" /></svg>
                </button>
                <button type="button" aria-label="Decrease" className={clsx('flex flex-1 items-center justify-center', RAISED)}>
                  <svg viewBox="0 0 8 4" className="h-1 w-2"><path d="M0 0h8L4 4z" fill="#111" /></svg>
                </button>
              </div>
            </div>
          </div>
          <div className="ml-[11px] flex w-[246px] flex-col">
            <label htmlFor="fill-style" className="pt-px pr-2 text-center">Fill style</label>
            <Combo id="fill-style" value="Solid Color" className="h-10" />
          </div>
          <DialogButton className="mt-[24px] ml-[15px]">
            <span className="underline underline-offset-4">O</span>ptions...
          </DialogButton>
        </div>
      </div>

      <div className="relative flex min-h-0 flex-1">
        <main className="relative flex-1 border-2 border-r-0 border-[#8f8b7d] border-b-[#c9c6b8] bg-[#827f80]">
          <svg viewBox="0 0 12 21" className="absolute top-[64px] left-[376px] h-[42px] w-6" aria-hidden="true">
            <path d="M.5.8v16l3.700-3.500 2.700 6.400 2.700-1.200L7 12.300h4.700z" fill="#fff" stroke="#222" />
          </svg>
        </main>
        <ColorPanel />
        <OpenDialog />
      </div>

      <div className={clsx('flex h-[40px] shrink-0 items-center justify-between border-t-[3px] border-[#fbfaf2] pr-1 pl-[2px]', TAHOMA)}>
        <span className="pt-1">For Help, press F1</span>
        <span className="mt-1 border-t-2 border-l-2 border-[#bab6a6] pr-2 pl-px">Image: None</span>
      </div>

      <Taskbar />
    </div>
  );
}
